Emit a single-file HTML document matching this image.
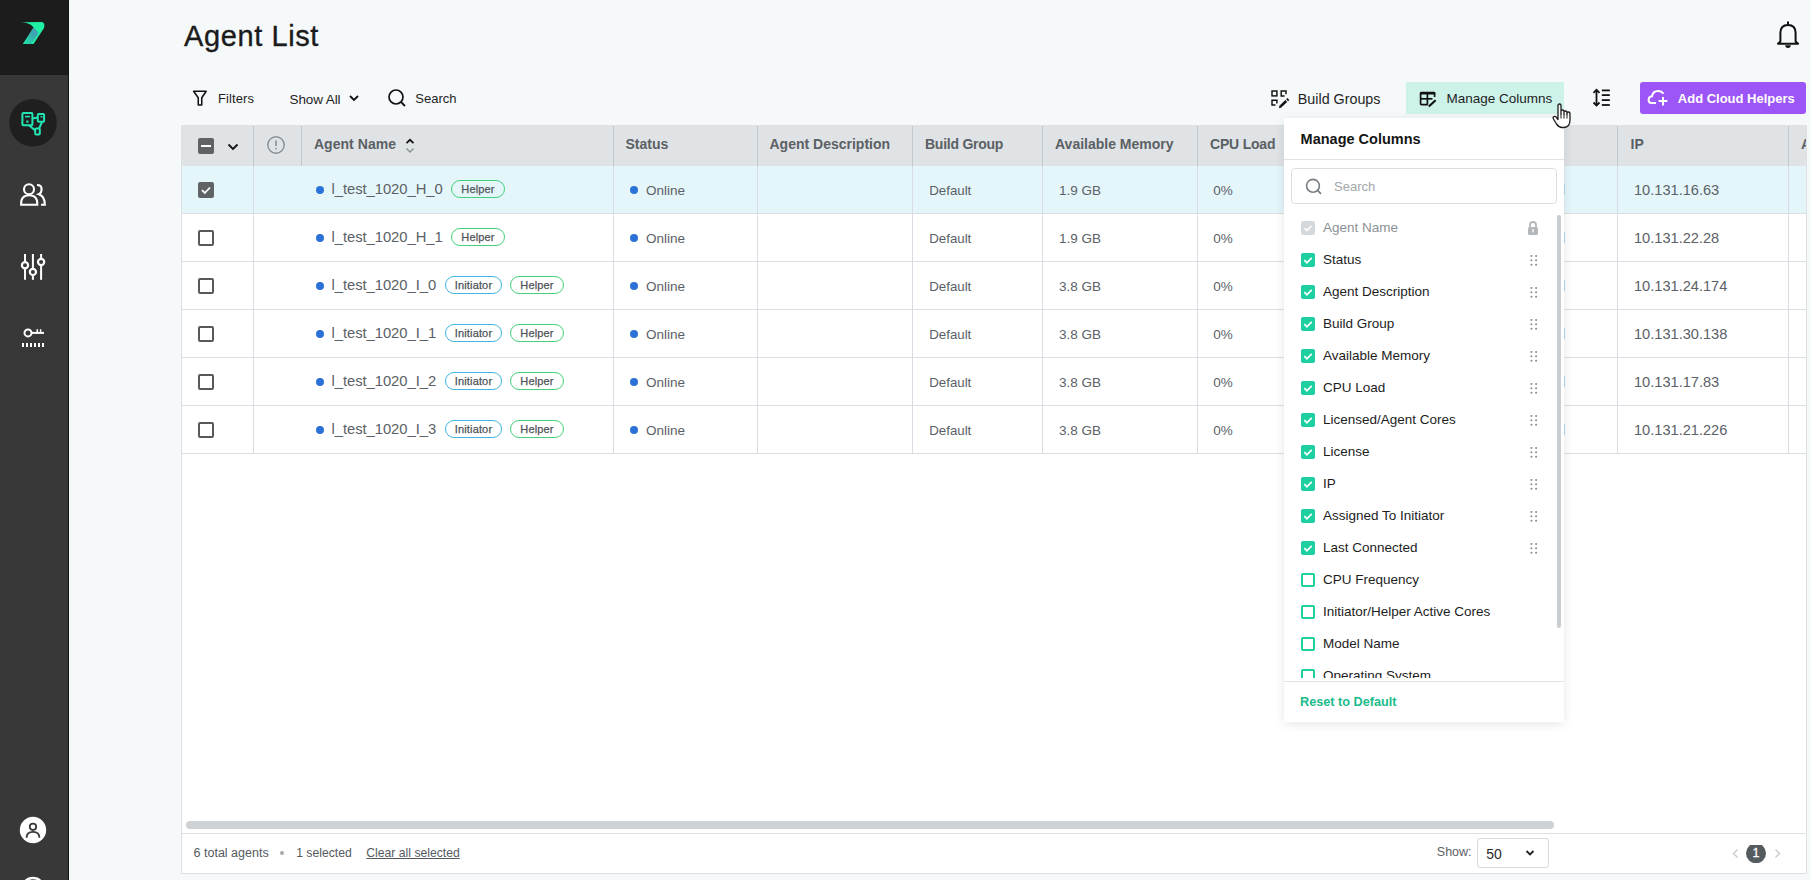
<!DOCTYPE html>
<html><head><meta charset="utf-8"><title>Agent List</title>
<style>
html,body{margin:0;padding:0;width:1811px;height:880px;overflow:hidden;background:#f6f9fa;font-family:"Liberation Sans", sans-serif;}
.r{position:absolute;}
.t{position:absolute;white-space:nowrap;line-height:1;}
.badge{box-sizing:border-box;border-radius:9px;display:flex;align-items:center;justify-content:center;font-size:11px;font-weight:400;color:#4f5458;letter-spacing:0.15px;-webkit-text-stroke:0.25px #4f5458}
.badge span{display:block;line-height:1;margin-top:1px}
</style></head><body>
<div class="r" style="left:0px;top:0px;width:68px;height:880px;background:#383838;"></div>
<div class="r" style="left:0px;top:0px;width:68px;height:75px;background:#1c1c1c;"></div>
<div class="r" style="left:68px;top:0px;width:1px;height:880px;background:#141414;"></div>
<svg class="r" style="left:0;top:0" width="68" height="74" viewBox="0 0 68 74">
<defs><linearGradient id="lg" gradientUnits="userSpaceOnUse" x1="38" y1="28" x2="26" y2="43"><stop offset="0" stop-color="#4a94bc"/><stop offset="0.45" stop-color="#3aa9b0"/><stop offset="1" stop-color="#22dca6"/></linearGradient></defs>
<path d="M21.5 22.3 L41.5 22 Q45.5 22.5 44 28 L33.5 44 L23 44 L33.6 27.5 Q30 22.8 21.5 22.3 Z" fill="#1ff0a4"/>
<path d="M33.6 27.5 Q37 30.5 38.2 33.5 L31.5 44 L23 44 Z" fill="url(#lg)"/>
</svg>
<svg class="r" style="left:9px;top:99px" width="48" height="48" viewBox="0 0 48 48">
<circle cx="24" cy="23.8" r="23.8" fill="#1f1f1f"/>
<g fill="none" stroke="#22e6b4" stroke-width="2">
<rect x="13.4" y="14" width="10" height="12.2" rx="1"/>
<rect x="28.8" y="15" width="6.3" height="7.8" rx="1"/>
<rect x="26.2" y="29.4" width="4.6" height="6" rx="1"/>
<line x1="23.4" y1="19.5" x2="29" y2="18.5"/>
<line x1="20" y1="26.2" x2="26.3" y2="31.5"/>
<line x1="33" y1="23" x2="30" y2="29.6"/>
</g>
<rect x="16" y="16.8" width="5" height="1.6" fill="#22e6b4"/>
<rect x="17.3" y="21.5" width="2.2" height="2.2" fill="#22e6b4"/>
<rect x="31.5" y="17" width="2" height="1.5" fill="#22e6b4"/>
</svg>
<svg class="r" style="left:13px;top:175px" width="40" height="40" viewBox="0 0 40 40">
<g fill="none" stroke="#fff" stroke-width="2.1">
<circle cx="16" cy="14.2" r="5"/>
<path d="M8.1 29.8 L24.3 29.8 Q24.8 20.2 16.2 20.2 Q7.6 20.2 8.1 29.8 Z"/>
<path d="M24 10 Q28.6 10 28.6 14.2 Q28.6 18 25.8 19.2 Q31.8 21 31.8 29.8 L28 29.8"/>
</g></svg>
<svg class="r" style="left:13px;top:246px" width="40" height="40" viewBox="0 0 40 40">
<g fill="none" stroke="#fff" stroke-width="2">
<line x1="12" y1="8" x2="12" y2="16.2"/><line x1="12" y1="22.4" x2="12" y2="33.8"/>
<line x1="19.9" y1="8" x2="19.9" y2="22.8"/><line x1="19.9" y1="29" x2="19.9" y2="33.8"/>
<line x1="28.1" y1="8" x2="28.1" y2="12.9"/><line x1="28.1" y1="19.1" x2="28.1" y2="33.8"/>
</g>
<g fill="none" stroke="#fff" stroke-width="2.2">
<circle cx="12" cy="19.3" r="3.1"/><circle cx="19.9" cy="25.9" r="3.1"/><circle cx="28.1" cy="16" r="3.1"/>
</g></svg>
<svg class="r" style="left:13px;top:320px" width="40" height="30" viewBox="0 0 40 30">
<g fill="none" stroke="#fff" stroke-width="2">
<circle cx="15" cy="12.9" r="3.5"/>
<line x1="18.5" y1="12.9" x2="31" y2="12.9"/>
<line x1="24.3" y1="12.9" x2="24.3" y2="9.2" stroke-width="1.5"/><line x1="27.6" y1="12.9" x2="27.6" y2="9.2" stroke-width="1.5"/>
</g>
<g fill="#fff"><rect x="9" y="23" width="2" height="4"/><rect x="13" y="23" width="2" height="4"/><rect x="17" y="23" width="2" height="4"/><rect x="21" y="23" width="2" height="4"/><rect x="25" y="23" width="2" height="4"/><rect x="29" y="23" width="2" height="4"/></g>
</svg>
<svg class="r" style="left:13px;top:810px" width="40" height="70" viewBox="0 0 40 70">
<circle cx="20" cy="20" r="13.2" fill="#fff"/>
<circle cx="20" cy="16.8" r="3.2" fill="none" stroke="#383838" stroke-width="1.8"/>
<path d="M13.6 27.8 Q13.6 21.8 20 21.8 Q26.4 21.8 26.4 27.8" fill="none" stroke="#383838" stroke-width="1.8"/>
<circle cx="20" cy="79" r="11" fill="none" stroke="#fff" stroke-width="2.4"/>
</svg>
<div class="r" style="left:69px;top:0px;width:1742px;height:880px;background:#f6f9fa;"></div>
<div class="t " style="left:184px;top:21.95px;font-size:29px;color:#1b1b1b;font-weight:400;letter-spacing:0.6px;-webkit-text-stroke:0.35px #1b1b1b">Agent List</div>
<svg class="r" style="left:1774px;top:18px" width="28" height="34" viewBox="0 0 28 34">
<g fill="none" stroke="#111" stroke-width="2">
<line x1="14" y1="3.5" x2="14" y2="6.5"/>
<path d="M6.4 23.5 L6.4 15 Q6.4 7 14 7 Q21.6 7 21.6 15 L21.6 23.5 L24 25.8 L4 25.8 Z" stroke-linejoin="round"/>
</g>
<path d="M11.2 27.3 L16.8 27.3 Q16.6 30 14 30 Q11.4 30 11.2 27.3 Z" fill="#111"/>
</svg>
<svg class="r" style="left:190px;top:88px" width="20" height="20" viewBox="0 0 20 20">
<path d="M3.6 3.3 L16.2 3.3 L11.75 9.7 L11.75 16.9 L8.25 16.9 L8.25 9.7 Z" fill="none" stroke="#111" stroke-width="1.55" stroke-linejoin="round"/></svg>
<div class="t " style="left:218px;top:92.20px;font-size:13px;color:#1f1f1f;font-weight:400;letter-spacing:0.1px">Filters</div>
<div class="t " style="left:289.5px;top:92.57px;font-size:13.5px;color:#1f1f1f;font-weight:400;letter-spacing:-0.1px">Show All</div>
<svg class="r" style="left:347px;top:93px" width="14" height="10" viewBox="0 0 14 10">
<path d="M3 3 L7 7 L11 3" fill="none" stroke="#111" stroke-width="1.8"/></svg>
<svg class="r" style="left:386px;top:88px" width="22" height="20" viewBox="0 0 22 20">
<circle cx="10" cy="9" r="7" fill="none" stroke="#111" stroke-width="1.7"/><line x1="15" y1="14" x2="19" y2="18" stroke="#111" stroke-width="1.8"/></svg>
<div class="t " style="left:415.3px;top:92.20px;font-size:13px;color:#1f1f1f;font-weight:400;">Search</div>
<svg class="r" style="left:1268px;top:87px" width="24" height="24" viewBox="0 0 24 24">
<g fill="none" stroke="#111" stroke-width="1.45">
<rect x="4" y="4" width="4.9" height="4.9"/>
<path d="M18 7.2 L18 4 L13.2 4 L13.2 8.9 L16.6 8.9"/>
<path d="M8.9 16.4 L8.9 13.2 L4 13.2 L4 18 L7.5 18"/>
</g>
<g stroke="#111" stroke-width="2.6">
<line x1="12.3" y1="19.6" x2="18.3" y2="14"/><line x1="19.1" y1="13.2" x2="20.4" y2="12"/>
</g>
<path d="M11 21.2 L11.4 18.6 L13.5 20.6 Z" fill="#111"/>
</svg>
<div class="t " style="left:1297.8px;top:91.50px;font-size:14.3px;color:#1f1f1f;font-weight:400;">Build Groups</div>
<div class="r" style="left:1406px;top:82px;width:158px;height:32px;background:#cdf2ea;"></div>
<svg class="r" style="left:1418px;top:90px" width="22" height="20" viewBox="0 0 22 20">
<g fill="none" stroke="#111" stroke-width="1.7">
<path d="M9.8 14.7 L3.6 14.7 Q2.6 14.7 2.6 13.7 L2.6 3.2 Q2.6 2.6 3.6 2.6 L15.8 2.6 Q16.6 2.6 16.6 3.6 L16.6 7"/>
<line x1="2.6" y1="8.8" x2="14.5" y2="8.8"/><line x1="9.4" y1="3.5" x2="9.4" y2="14.7"/>
</g>
<rect x="2" y="2" width="15.2" height="2.6" rx="0.6" fill="#111"/>
<line x1="10.8" y1="16.6" x2="17.6" y2="10.2" stroke="#111" stroke-width="2.1"/>
</svg>
<div class="t " style="left:1446.5px;top:91.57px;font-size:13.5px;color:#1f1f1f;font-weight:400;">Manage Columns</div>
<svg class="r" style="left:1590px;top:87px" width="22" height="22" viewBox="0 0 22 22">
<g fill="none" stroke="#111" stroke-width="1.8">
<line x1="6.5" y1="3" x2="6.5" y2="18"/><path d="M3.5 5.8 L6.5 2.8 L9.5 5.8 M3.5 15.5 L6.5 18.5 L9.5 15.5"/>
<line x1="11.8" y1="3.4" x2="19.8" y2="3.4"/><line x1="11.8" y1="8.1" x2="19.8" y2="8.1"/><line x1="11.8" y1="13.1" x2="19.8" y2="13.1"/><line x1="11.8" y1="18" x2="19.8" y2="18"/>
</g></svg>
<div class="r" style="left:1640px;top:82px;width:166px;height:32px;background:#9c55f6;border-radius:3px"></div>
<svg class="r" style="left:1646px;top:88px" width="24" height="20" viewBox="0 0 24 20">
<g fill="none" stroke="#fff" stroke-width="2">
<path d="M10 15 L5.5 15 Q2.6 15 2.6 11.8 Q2.6 8.6 6 8.3 Q6.8 2.9 12 2.9 Q15.6 2.9 17.5 5.8"/>
<line x1="17" y1="9" x2="17" y2="17.5"/><line x1="12.6" y1="13" x2="21.4" y2="13"/>
</g></svg>
<div class="t " style="left:1677.8px;top:92.00px;font-size:13px;color:#fff;font-weight:700;">Add Cloud Helpers</div>
<div class="r" style="left:181px;top:125px;width:1626px;height:749px;background:#fff;border:1px solid #dde1e4;box-sizing:border-box;border-radius:1px"></div>
<div class="r" style="left:182px;top:126px;width:1624px;height:40px;background:#dfe3e6;"></div>
<div class="r" style="left:182px;top:166px;width:1624px;height:47px;background:#e4f6fa;"></div>
<div class="r" style="left:182px;top:213px;width:1624px;height:1px;background:#dadfe2;"></div>
<div class="r" style="left:182px;top:261px;width:1624px;height:1px;background:#dadfe2;"></div>
<div class="r" style="left:182px;top:309px;width:1624px;height:1px;background:#dadfe2;"></div>
<div class="r" style="left:182px;top:357px;width:1624px;height:1px;background:#dadfe2;"></div>
<div class="r" style="left:182px;top:405px;width:1624px;height:1px;background:#dadfe2;"></div>
<div class="r" style="left:182px;top:453px;width:1624px;height:1px;background:#dadfe2;"></div>
<div class="r" style="left:253px;top:166px;width:1px;height:287px;background:#d9dce2;"></div>
<div class="r" style="left:253px;top:126px;width:1px;height:40px;background:#c3c8cc;"></div>
<div class="r" style="left:613px;top:166px;width:1px;height:287px;background:#d9dce2;"></div>
<div class="r" style="left:613px;top:126px;width:1px;height:40px;background:#c3c8cc;"></div>
<div class="r" style="left:757px;top:166px;width:1px;height:287px;background:#d9dce2;"></div>
<div class="r" style="left:757px;top:126px;width:1px;height:40px;background:#c3c8cc;"></div>
<div class="r" style="left:912px;top:166px;width:1px;height:287px;background:#d9dce2;"></div>
<div class="r" style="left:912px;top:126px;width:1px;height:40px;background:#c3c8cc;"></div>
<div class="r" style="left:1042px;top:166px;width:1px;height:287px;background:#d9dce2;"></div>
<div class="r" style="left:1042px;top:126px;width:1px;height:40px;background:#c3c8cc;"></div>
<div class="r" style="left:1197px;top:166px;width:1px;height:287px;background:#d9dce2;"></div>
<div class="r" style="left:1197px;top:126px;width:1px;height:40px;background:#c3c8cc;"></div>
<div class="r" style="left:1617px;top:166px;width:1px;height:287px;background:#d9dce2;"></div>
<div class="r" style="left:1617px;top:126px;width:1px;height:40px;background:#c3c8cc;"></div>
<div class="r" style="left:1788px;top:166px;width:1px;height:287px;background:#d9dce2;"></div>
<div class="r" style="left:1788px;top:126px;width:1px;height:40px;background:#c3c8cc;"></div>
<div class="r" style="left:301px;top:126px;width:1px;height:40px;background:#c3c8cc;"></div>
<div class="r" style="left:198px;top:138px;width:16px;height:16px;background:#5f6366;border-radius:2px"></div>
<div class="r" style="left:201px;top:145px;width:10px;height:2px;background:#fff;"></div>
<svg class="r" style="left:226px;top:141px" width="14" height="12" viewBox="0 0 14 12">
<path d="M2.5 3.5 L7 8 L11.5 3.5" fill="none" stroke="#111" stroke-width="1.8"/></svg>
<svg class="r" style="left:265px;top:134px" width="22" height="22" viewBox="0 0 22 22">
<circle cx="11" cy="11" r="8.2" fill="none" stroke="#8a8f93" stroke-width="1.4"/>
<line x1="11" y1="6.5" x2="11" y2="12" stroke="#8a8f93" stroke-width="1.6"/><circle cx="11" cy="14.6" r="0.9" fill="#8a8f93"/></svg>
<div class="t " style="left:313.9px;top:137.05px;font-size:14px;color:#5b6064;font-weight:700;letter-spacing:0.05px">Agent Name</div>
<svg class="r" style="left:402px;top:136px" width="16" height="20" viewBox="0 0 16 20">
<path d="M4.5 7.2 L8 3.8 L11.5 7.2" fill="none" stroke="#111" stroke-width="1.7"/>
<path d="M4.5 12.5 L8 16 L11.5 12.5" fill="none" stroke="#8e9396" stroke-width="1.5"/></svg>
<div class="t " style="left:625.5px;top:137.05px;font-size:14px;color:#5b6064;font-weight:700;">Status</div>
<div class="t " style="left:769.5px;top:137.05px;font-size:14px;color:#5b6064;font-weight:700;">Agent Description</div>
<div class="t " style="left:925px;top:137.05px;font-size:14px;color:#5b6064;font-weight:700;letter-spacing:-0.25px">Build Group</div>
<div class="t " style="left:1055px;top:137.05px;font-size:14px;color:#5b6064;font-weight:700;">Available Memory</div>
<div class="t " style="left:1210px;top:137.05px;font-size:14px;color:#5b6064;font-weight:700;letter-spacing:-0.2px">CPU Load</div>
<div class="t " style="left:1630.5px;top:137.05px;font-size:14px;color:#5b6064;font-weight:700;">IP</div>
<div class="r" style="left:1789px;top:126px;width:17px;height:40px;overflow:hidden">
<div class="t " style="left:12px;top:11.05px;font-size:14px;color:#5b6064;font-weight:700;">A</div>
</div>
<div class="r" style="left:198px;top:181.5px;width:16px;height:16px;background:#5f6366;border-radius:2px"></div>
<svg class="r" style="left:198px;top:181.5px" width="16" height="16" viewBox="0 0 16 16"><path d="M4 8.2 L6.8 11 L12 5.5" fill="none" stroke="#fff" stroke-width="1.8"/></svg>
<div class="r" style="left:316px;top:185.5px;width:8px;height:8px;border-radius:50%;background:#2a72d8"></div>
<div class="t " style="left:331.5px;top:182.17px;font-size:14.8px;color:#5b6166;font-weight:400;letter-spacing:-0.05px">l_test_1020_H_0</div>
<div class="r badge" style="left:451px;top:180.0px;width:54px;height:18px;border:1.5px solid #43d17b"><span>Helper</span></div>
<div class="r" style="left:630px;top:185.5px;width:8px;height:8px;border-radius:50%;background:#2a72d8"></div>
<div class="t " style="left:646px;top:183.77px;font-size:13.5px;color:#5b6166;font-weight:400;">Online</div>
<div class="t " style="left:929.2px;top:183.94px;font-size:13.3px;color:#5b6166;font-weight:400;">Default</div>
<div class="t " style="left:1059px;top:183.77px;font-size:13.5px;color:#5b6166;font-weight:400;">1.9 GB</div>
<div class="t " style="left:1213.3px;top:183.77px;font-size:13.5px;color:#5b6166;font-weight:400;">0%</div>
<div class="t " style="left:1634px;top:182.74px;font-size:14.6px;color:#5b6166;font-weight:400;">10.131.16.63</div>
<div class="r" style="left:1564px;top:184.0px;width:1px;height:11px;background:#b5dcf3;"></div>
<div class="r" style="left:198px;top:229.5px;width:16px;height:16px;border:2px solid #55595c;box-sizing:border-box;border-radius:2px;background:#fff"></div>
<div class="r" style="left:316px;top:233.5px;width:8px;height:8px;border-radius:50%;background:#2a72d8"></div>
<div class="t " style="left:331.5px;top:230.17px;font-size:14.8px;color:#5b6166;font-weight:400;letter-spacing:-0.05px">l_test_1020_H_1</div>
<div class="r badge" style="left:451px;top:228.0px;width:54px;height:18px;border:1.5px solid #43d17b"><span>Helper</span></div>
<div class="r" style="left:630px;top:233.5px;width:8px;height:8px;border-radius:50%;background:#2a72d8"></div>
<div class="t " style="left:646px;top:231.77px;font-size:13.5px;color:#5b6166;font-weight:400;">Online</div>
<div class="t " style="left:929.2px;top:231.94px;font-size:13.3px;color:#5b6166;font-weight:400;">Default</div>
<div class="t " style="left:1059px;top:231.77px;font-size:13.5px;color:#5b6166;font-weight:400;">1.9 GB</div>
<div class="t " style="left:1213.3px;top:231.77px;font-size:13.5px;color:#5b6166;font-weight:400;">0%</div>
<div class="t " style="left:1634px;top:230.74px;font-size:14.6px;color:#5b6166;font-weight:400;">10.131.22.28</div>
<div class="r" style="left:1564px;top:232.0px;width:1px;height:11px;background:#b5dcf3;"></div>
<div class="r" style="left:198px;top:277.5px;width:16px;height:16px;border:2px solid #55595c;box-sizing:border-box;border-radius:2px;background:#fff"></div>
<div class="r" style="left:316px;top:281.5px;width:8px;height:8px;border-radius:50%;background:#2a72d8"></div>
<div class="t " style="left:331.5px;top:278.17px;font-size:14.8px;color:#5b6166;font-weight:400;letter-spacing:-0.05px">l_test_1020_I_0</div>
<div class="r badge" style="left:445px;top:276.0px;width:57px;height:18px;border:1.5px solid #41b6e0"><span>Initiator</span></div>
<div class="r badge" style="left:510px;top:276.0px;width:54px;height:18px;border:1.5px solid #43d17b"><span>Helper</span></div>
<div class="r" style="left:630px;top:281.5px;width:8px;height:8px;border-radius:50%;background:#2a72d8"></div>
<div class="t " style="left:646px;top:279.77px;font-size:13.5px;color:#5b6166;font-weight:400;">Online</div>
<div class="t " style="left:929.2px;top:279.94px;font-size:13.3px;color:#5b6166;font-weight:400;">Default</div>
<div class="t " style="left:1059px;top:279.77px;font-size:13.5px;color:#5b6166;font-weight:400;">3.8 GB</div>
<div class="t " style="left:1213.3px;top:279.77px;font-size:13.5px;color:#5b6166;font-weight:400;">0%</div>
<div class="t " style="left:1634px;top:278.74px;font-size:14.6px;color:#5b6166;font-weight:400;">10.131.24.174</div>
<div class="r" style="left:1564px;top:280.0px;width:1px;height:11px;background:#b5dcf3;"></div>
<div class="r" style="left:198px;top:325.5px;width:16px;height:16px;border:2px solid #55595c;box-sizing:border-box;border-radius:2px;background:#fff"></div>
<div class="r" style="left:316px;top:329.5px;width:8px;height:8px;border-radius:50%;background:#2a72d8"></div>
<div class="t " style="left:331.5px;top:326.17px;font-size:14.8px;color:#5b6166;font-weight:400;letter-spacing:-0.05px">l_test_1020_I_1</div>
<div class="r badge" style="left:445px;top:324.0px;width:57px;height:18px;border:1.5px solid #41b6e0"><span>Initiator</span></div>
<div class="r badge" style="left:510px;top:324.0px;width:54px;height:18px;border:1.5px solid #43d17b"><span>Helper</span></div>
<div class="r" style="left:630px;top:329.5px;width:8px;height:8px;border-radius:50%;background:#2a72d8"></div>
<div class="t " style="left:646px;top:327.77px;font-size:13.5px;color:#5b6166;font-weight:400;">Online</div>
<div class="t " style="left:929.2px;top:327.94px;font-size:13.3px;color:#5b6166;font-weight:400;">Default</div>
<div class="t " style="left:1059px;top:327.77px;font-size:13.5px;color:#5b6166;font-weight:400;">3.8 GB</div>
<div class="t " style="left:1213.3px;top:327.77px;font-size:13.5px;color:#5b6166;font-weight:400;">0%</div>
<div class="t " style="left:1634px;top:326.74px;font-size:14.6px;color:#5b6166;font-weight:400;">10.131.30.138</div>
<div class="r" style="left:1564px;top:328.0px;width:1px;height:11px;background:#b5dcf3;"></div>
<div class="r" style="left:198px;top:373.5px;width:16px;height:16px;border:2px solid #55595c;box-sizing:border-box;border-radius:2px;background:#fff"></div>
<div class="r" style="left:316px;top:377.5px;width:8px;height:8px;border-radius:50%;background:#2a72d8"></div>
<div class="t " style="left:331.5px;top:374.17px;font-size:14.8px;color:#5b6166;font-weight:400;letter-spacing:-0.05px">l_test_1020_I_2</div>
<div class="r badge" style="left:445px;top:372.0px;width:57px;height:18px;border:1.5px solid #41b6e0"><span>Initiator</span></div>
<div class="r badge" style="left:510px;top:372.0px;width:54px;height:18px;border:1.5px solid #43d17b"><span>Helper</span></div>
<div class="r" style="left:630px;top:377.5px;width:8px;height:8px;border-radius:50%;background:#2a72d8"></div>
<div class="t " style="left:646px;top:375.77px;font-size:13.5px;color:#5b6166;font-weight:400;">Online</div>
<div class="t " style="left:929.2px;top:375.94px;font-size:13.3px;color:#5b6166;font-weight:400;">Default</div>
<div class="t " style="left:1059px;top:375.77px;font-size:13.5px;color:#5b6166;font-weight:400;">3.8 GB</div>
<div class="t " style="left:1213.3px;top:375.77px;font-size:13.5px;color:#5b6166;font-weight:400;">0%</div>
<div class="t " style="left:1634px;top:374.74px;font-size:14.6px;color:#5b6166;font-weight:400;">10.131.17.83</div>
<div class="r" style="left:1564px;top:376.0px;width:1px;height:11px;background:#b5dcf3;"></div>
<div class="r" style="left:198px;top:421.5px;width:16px;height:16px;border:2px solid #55595c;box-sizing:border-box;border-radius:2px;background:#fff"></div>
<div class="r" style="left:316px;top:425.5px;width:8px;height:8px;border-radius:50%;background:#2a72d8"></div>
<div class="t " style="left:331.5px;top:422.17px;font-size:14.8px;color:#5b6166;font-weight:400;letter-spacing:-0.05px">l_test_1020_I_3</div>
<div class="r badge" style="left:445px;top:420.0px;width:57px;height:18px;border:1.5px solid #41b6e0"><span>Initiator</span></div>
<div class="r badge" style="left:510px;top:420.0px;width:54px;height:18px;border:1.5px solid #43d17b"><span>Helper</span></div>
<div class="r" style="left:630px;top:425.5px;width:8px;height:8px;border-radius:50%;background:#2a72d8"></div>
<div class="t " style="left:646px;top:423.77px;font-size:13.5px;color:#5b6166;font-weight:400;">Online</div>
<div class="t " style="left:929.2px;top:423.94px;font-size:13.3px;color:#5b6166;font-weight:400;">Default</div>
<div class="t " style="left:1059px;top:423.77px;font-size:13.5px;color:#5b6166;font-weight:400;">3.8 GB</div>
<div class="t " style="left:1213.3px;top:423.77px;font-size:13.5px;color:#5b6166;font-weight:400;">0%</div>
<div class="t " style="left:1634px;top:422.74px;font-size:14.6px;color:#5b6166;font-weight:400;">10.131.21.226</div>
<div class="r" style="left:1564px;top:424.0px;width:1px;height:11px;background:#b5dcf3;"></div>
<div class="r" style="left:186px;top:821px;width:1368px;height:8px;background:#cfd2d4;border-radius:4px"></div>
<div class="r" style="left:182px;top:833px;width:1624px;height:1px;background:#dde1e4;"></div>
<div class="t " style="left:193.6px;top:846.92px;font-size:12.5px;color:#555a5e;font-weight:400;">6 total agents</div>
<div class="r" style="left:280px;top:851px;width:4px;height:4px;background:#a5a9ac;border-radius:50%"></div>
<div class="t " style="left:296.2px;top:847.17px;font-size:12.2px;color:#555a5e;font-weight:400;">1 selected</div>
<div class="t " style="left:366.3px;top:847.17px;font-size:12.2px;color:#555a5e;font-weight:400;text-decoration:underline">Clear all selected</div>
<div class="t " style="left:1436.8px;top:845.72px;font-size:12.5px;color:#5b6064;font-weight:400;">Show:</div>
<div class="r" style="left:1477px;top:838px;width:72px;height:30px;background:#fff;border:1px solid #d6dadd;box-sizing:border-box;border-radius:3px"></div>
<div class="t " style="left:1486.2px;top:846.75px;font-size:14px;color:#2a2a2a;font-weight:400;">50</div>
<svg class="r" style="left:1523px;top:847px" width="14" height="12" viewBox="0 0 14 12">
<path d="M3.5 4 L7 7.5 L10.5 4" fill="none" stroke="#222" stroke-width="1.8"/></svg>
<svg class="r" style="left:1728px;top:845px" width="56" height="18" viewBox="0 0 56 18">
<path d="M9.5 4.5 L5.5 8.5 L9.5 12.5" fill="none" stroke="#c4c8cb" stroke-width="1.3"/>
<circle cx="28" cy="8.3" r="10" fill="#555b5f"/>
<path d="M47.5 4.5 L51.5 8.5 L47.5 12.5" fill="none" stroke="#c4c8cb" stroke-width="1.3"/>
</svg>
<div class="t " style="left:1752.6px;top:846.92px;font-size:12.5px;color:#fff;font-weight:400;-webkit-text-stroke:0.3px #fff">1</div>
<div class="r" style="left:1284px;top:118px;width:280px;height:604px;background:#fff;box-shadow:0 2px 10px rgba(0,0,0,0.10);"></div>
<div class="t " style="left:1300.6px;top:132.13px;font-size:14.5px;color:#151515;font-weight:700;">Manage Columns</div>
<div class="r" style="left:1284px;top:159px;width:280px;height:1px;background:#e1e4e6;"></div>
<div class="r" style="left:1291px;top:168px;width:266px;height:36px;background:#fff;border:1px solid #dcdfe2;box-sizing:border-box;border-radius:4px"></div>
<svg class="r" style="left:1303px;top:177px" width="22" height="20" viewBox="0 0 22 20">
<circle cx="10" cy="8.8" r="6.4" fill="none" stroke="#777c80" stroke-width="1.6"/><line x1="14.6" y1="13.4" x2="18" y2="16.8" stroke="#777c80" stroke-width="1.7"/></svg>
<div class="t " style="left:1334px;top:179.60px;font-size:13px;color:#a2a6a9;font-weight:400;">Search</div>
<div class="r" style="left:1284px;top:210px;width:280px;height:468px;overflow:hidden">
<div class="r" style="left:17px;top:11px;width:14px;height:14px;background:#d5d9dc;border-radius:2px"></div>
<svg class="r" style="left:17px;top:11px" width="14" height="14" viewBox="0 0 14 14"><path d="M3.5 7.2 L6 9.6 L10.5 5" fill="none" stroke="#fff" stroke-width="1.6"/></svg>
<svg class="r" style="left:242px;top:10px" width="14" height="16" viewBox="0 0 14 16"><path d="M4 7 L4 5 Q4 2 7 2 Q10 2 10 5 L10 7" fill="none" stroke="#b4b8bb" stroke-width="1.8"/><rect x="2" y="7" width="10" height="8" rx="1.5" fill="#b4b8bb"/><rect x="6.3" y="9" width="1.3" height="3.2" fill="#fff"/></svg>
<div class="t " style="left:39px;top:11.17px;font-size:13.5px;color:#8d9296;font-weight:400;">Agent Name</div>
<div class="r" style="left:17px;top:43px;width:14px;height:14px;background:#1ecf9f;border-radius:2px"></div>
<svg class="r" style="left:17px;top:43px" width="14" height="14" viewBox="0 0 14 14"><path d="M3.3 7.2 L5.9 9.8 L10.8 4.8" fill="none" stroke="#fff" stroke-width="1.7"/></svg>
<svg class="r" style="left:244px;top:42px" width="10" height="16" viewBox="0 0 10 16"><g fill="#868d94"><circle cx="3.4" cy="4" r="1.05"/><circle cx="8.1" cy="4" r="1.05"/><circle cx="3.4" cy="8.2" r="1.05"/><circle cx="8.1" cy="8.2" r="1.05"/><circle cx="3.4" cy="12.8" r="1.05"/><circle cx="8.1" cy="12.8" r="1.05"/></g></svg>
<div class="t " style="left:39px;top:43.17px;font-size:13.5px;color:#1d1d1d;font-weight:400;">Status</div>
<div class="r" style="left:17px;top:75px;width:14px;height:14px;background:#1ecf9f;border-radius:2px"></div>
<svg class="r" style="left:17px;top:75px" width="14" height="14" viewBox="0 0 14 14"><path d="M3.3 7.2 L5.9 9.8 L10.8 4.8" fill="none" stroke="#fff" stroke-width="1.7"/></svg>
<svg class="r" style="left:244px;top:74px" width="10" height="16" viewBox="0 0 10 16"><g fill="#868d94"><circle cx="3.4" cy="4" r="1.05"/><circle cx="8.1" cy="4" r="1.05"/><circle cx="3.4" cy="8.2" r="1.05"/><circle cx="8.1" cy="8.2" r="1.05"/><circle cx="3.4" cy="12.8" r="1.05"/><circle cx="8.1" cy="12.8" r="1.05"/></g></svg>
<div class="t " style="left:39px;top:75.17px;font-size:13.5px;color:#1d1d1d;font-weight:400;">Agent Description</div>
<div class="r" style="left:17px;top:107px;width:14px;height:14px;background:#1ecf9f;border-radius:2px"></div>
<svg class="r" style="left:17px;top:107px" width="14" height="14" viewBox="0 0 14 14"><path d="M3.3 7.2 L5.9 9.8 L10.8 4.8" fill="none" stroke="#fff" stroke-width="1.7"/></svg>
<svg class="r" style="left:244px;top:106px" width="10" height="16" viewBox="0 0 10 16"><g fill="#868d94"><circle cx="3.4" cy="4" r="1.05"/><circle cx="8.1" cy="4" r="1.05"/><circle cx="3.4" cy="8.2" r="1.05"/><circle cx="8.1" cy="8.2" r="1.05"/><circle cx="3.4" cy="12.8" r="1.05"/><circle cx="8.1" cy="12.8" r="1.05"/></g></svg>
<div class="t " style="left:39px;top:107.17px;font-size:13.5px;color:#1d1d1d;font-weight:400;">Build Group</div>
<div class="r" style="left:17px;top:139px;width:14px;height:14px;background:#1ecf9f;border-radius:2px"></div>
<svg class="r" style="left:17px;top:139px" width="14" height="14" viewBox="0 0 14 14"><path d="M3.3 7.2 L5.9 9.8 L10.8 4.8" fill="none" stroke="#fff" stroke-width="1.7"/></svg>
<svg class="r" style="left:244px;top:138px" width="10" height="16" viewBox="0 0 10 16"><g fill="#868d94"><circle cx="3.4" cy="4" r="1.05"/><circle cx="8.1" cy="4" r="1.05"/><circle cx="3.4" cy="8.2" r="1.05"/><circle cx="8.1" cy="8.2" r="1.05"/><circle cx="3.4" cy="12.8" r="1.05"/><circle cx="8.1" cy="12.8" r="1.05"/></g></svg>
<div class="t " style="left:39px;top:139.17px;font-size:13.5px;color:#1d1d1d;font-weight:400;">Available Memory</div>
<div class="r" style="left:17px;top:171px;width:14px;height:14px;background:#1ecf9f;border-radius:2px"></div>
<svg class="r" style="left:17px;top:171px" width="14" height="14" viewBox="0 0 14 14"><path d="M3.3 7.2 L5.9 9.8 L10.8 4.8" fill="none" stroke="#fff" stroke-width="1.7"/></svg>
<svg class="r" style="left:244px;top:170px" width="10" height="16" viewBox="0 0 10 16"><g fill="#868d94"><circle cx="3.4" cy="4" r="1.05"/><circle cx="8.1" cy="4" r="1.05"/><circle cx="3.4" cy="8.2" r="1.05"/><circle cx="8.1" cy="8.2" r="1.05"/><circle cx="3.4" cy="12.8" r="1.05"/><circle cx="8.1" cy="12.8" r="1.05"/></g></svg>
<div class="t " style="left:39px;top:171.17px;font-size:13.5px;color:#1d1d1d;font-weight:400;">CPU Load</div>
<div class="r" style="left:17px;top:203px;width:14px;height:14px;background:#1ecf9f;border-radius:2px"></div>
<svg class="r" style="left:17px;top:203px" width="14" height="14" viewBox="0 0 14 14"><path d="M3.3 7.2 L5.9 9.8 L10.8 4.8" fill="none" stroke="#fff" stroke-width="1.7"/></svg>
<svg class="r" style="left:244px;top:202px" width="10" height="16" viewBox="0 0 10 16"><g fill="#868d94"><circle cx="3.4" cy="4" r="1.05"/><circle cx="8.1" cy="4" r="1.05"/><circle cx="3.4" cy="8.2" r="1.05"/><circle cx="8.1" cy="8.2" r="1.05"/><circle cx="3.4" cy="12.8" r="1.05"/><circle cx="8.1" cy="12.8" r="1.05"/></g></svg>
<div class="t " style="left:39px;top:203.17px;font-size:13.5px;color:#1d1d1d;font-weight:400;">Licensed/Agent Cores</div>
<div class="r" style="left:17px;top:235px;width:14px;height:14px;background:#1ecf9f;border-radius:2px"></div>
<svg class="r" style="left:17px;top:235px" width="14" height="14" viewBox="0 0 14 14"><path d="M3.3 7.2 L5.9 9.8 L10.8 4.8" fill="none" stroke="#fff" stroke-width="1.7"/></svg>
<svg class="r" style="left:244px;top:234px" width="10" height="16" viewBox="0 0 10 16"><g fill="#868d94"><circle cx="3.4" cy="4" r="1.05"/><circle cx="8.1" cy="4" r="1.05"/><circle cx="3.4" cy="8.2" r="1.05"/><circle cx="8.1" cy="8.2" r="1.05"/><circle cx="3.4" cy="12.8" r="1.05"/><circle cx="8.1" cy="12.8" r="1.05"/></g></svg>
<div class="t " style="left:39px;top:235.17px;font-size:13.5px;color:#1d1d1d;font-weight:400;">License</div>
<div class="r" style="left:17px;top:267px;width:14px;height:14px;background:#1ecf9f;border-radius:2px"></div>
<svg class="r" style="left:17px;top:267px" width="14" height="14" viewBox="0 0 14 14"><path d="M3.3 7.2 L5.9 9.8 L10.8 4.8" fill="none" stroke="#fff" stroke-width="1.7"/></svg>
<svg class="r" style="left:244px;top:266px" width="10" height="16" viewBox="0 0 10 16"><g fill="#868d94"><circle cx="3.4" cy="4" r="1.05"/><circle cx="8.1" cy="4" r="1.05"/><circle cx="3.4" cy="8.2" r="1.05"/><circle cx="8.1" cy="8.2" r="1.05"/><circle cx="3.4" cy="12.8" r="1.05"/><circle cx="8.1" cy="12.8" r="1.05"/></g></svg>
<div class="t " style="left:39px;top:267.17px;font-size:13.5px;color:#1d1d1d;font-weight:400;">IP</div>
<div class="r" style="left:17px;top:299px;width:14px;height:14px;background:#1ecf9f;border-radius:2px"></div>
<svg class="r" style="left:17px;top:299px" width="14" height="14" viewBox="0 0 14 14"><path d="M3.3 7.2 L5.9 9.8 L10.8 4.8" fill="none" stroke="#fff" stroke-width="1.7"/></svg>
<svg class="r" style="left:244px;top:298px" width="10" height="16" viewBox="0 0 10 16"><g fill="#868d94"><circle cx="3.4" cy="4" r="1.05"/><circle cx="8.1" cy="4" r="1.05"/><circle cx="3.4" cy="8.2" r="1.05"/><circle cx="8.1" cy="8.2" r="1.05"/><circle cx="3.4" cy="12.8" r="1.05"/><circle cx="8.1" cy="12.8" r="1.05"/></g></svg>
<div class="t " style="left:39px;top:299.17px;font-size:13.5px;color:#1d1d1d;font-weight:400;">Assigned To Initiator</div>
<div class="r" style="left:17px;top:331px;width:14px;height:14px;background:#1ecf9f;border-radius:2px"></div>
<svg class="r" style="left:17px;top:331px" width="14" height="14" viewBox="0 0 14 14"><path d="M3.3 7.2 L5.9 9.8 L10.8 4.8" fill="none" stroke="#fff" stroke-width="1.7"/></svg>
<svg class="r" style="left:244px;top:330px" width="10" height="16" viewBox="0 0 10 16"><g fill="#868d94"><circle cx="3.4" cy="4" r="1.05"/><circle cx="8.1" cy="4" r="1.05"/><circle cx="3.4" cy="8.2" r="1.05"/><circle cx="8.1" cy="8.2" r="1.05"/><circle cx="3.4" cy="12.8" r="1.05"/><circle cx="8.1" cy="12.8" r="1.05"/></g></svg>
<div class="t " style="left:39px;top:331.17px;font-size:13.5px;color:#1d1d1d;font-weight:400;">Last Connected</div>
<div class="r" style="left:17px;top:363px;width:14px;height:14px;border:2px solid #22cf9f;box-sizing:border-box;border-radius:2px"></div>
<div class="t " style="left:39px;top:363.17px;font-size:13.5px;color:#1d1d1d;font-weight:400;">CPU Frequency</div>
<div class="r" style="left:17px;top:395px;width:14px;height:14px;border:2px solid #22cf9f;box-sizing:border-box;border-radius:2px"></div>
<div class="t " style="left:39px;top:395.17px;font-size:13.5px;color:#1d1d1d;font-weight:400;">Initiator/Helper Active Cores</div>
<div class="r" style="left:17px;top:427px;width:14px;height:14px;border:2px solid #22cf9f;box-sizing:border-box;border-radius:2px"></div>
<div class="t " style="left:39px;top:427.17px;font-size:13.5px;color:#1d1d1d;font-weight:400;">Model Name</div>
<div class="r" style="left:17px;top:459px;width:14px;height:14px;border:2px solid #22cf9f;box-sizing:border-box;border-radius:2px"></div>
<div class="t " style="left:39px;top:459.17px;font-size:13.5px;color:#1d1d1d;font-weight:400;">Operating System</div>
</div>
<div class="r" style="left:1557px;top:215px;width:4px;height:413px;background:#c9cdd0;border-radius:2px"></div>
<div class="r" style="left:1284px;top:681px;width:280px;height:1px;background:#e1e4e6;"></div>
<div class="t " style="left:1300px;top:696.15px;font-size:12.7px;color:#1bbb8b;font-weight:700;">Reset to Default</div>
<svg class="r" style="left:1550.5px;top:102px" width="24" height="28" viewBox="0 0 24 28">
<path d="M7 3.5 Q7 2 8.5 2 Q10 2 10 3.5 L10 12 L10 9.5 Q10 8 11.5 8 Q13 8 13 9.5 L13 12 L13 10.5 Q13 9 14.5 9 Q16 9 16 10.5 L16 12.5 L16 11.5 Q16 10 17.5 10 Q19 10 19 11.5 L19 18 Q19 25 13 25.5 L11 25.5 Q8 25.5 5.5 22 L2.5 17 Q1.5 15 3 14.5 Q4.5 14 5.5 15.5 L7 17.5 Z" fill="#fff" stroke="#1a1a1a" stroke-width="1.3" stroke-linejoin="round"/>
<line x1="10" y1="12" x2="10" y2="16.5" stroke="#1a1a1a" stroke-width="1"/><line x1="13" y1="12" x2="13" y2="16.5" stroke="#1a1a1a" stroke-width="1"/><line x1="16" y1="12.5" x2="16" y2="16.5" stroke="#1a1a1a" stroke-width="1"/>
</svg>
</body></html>
